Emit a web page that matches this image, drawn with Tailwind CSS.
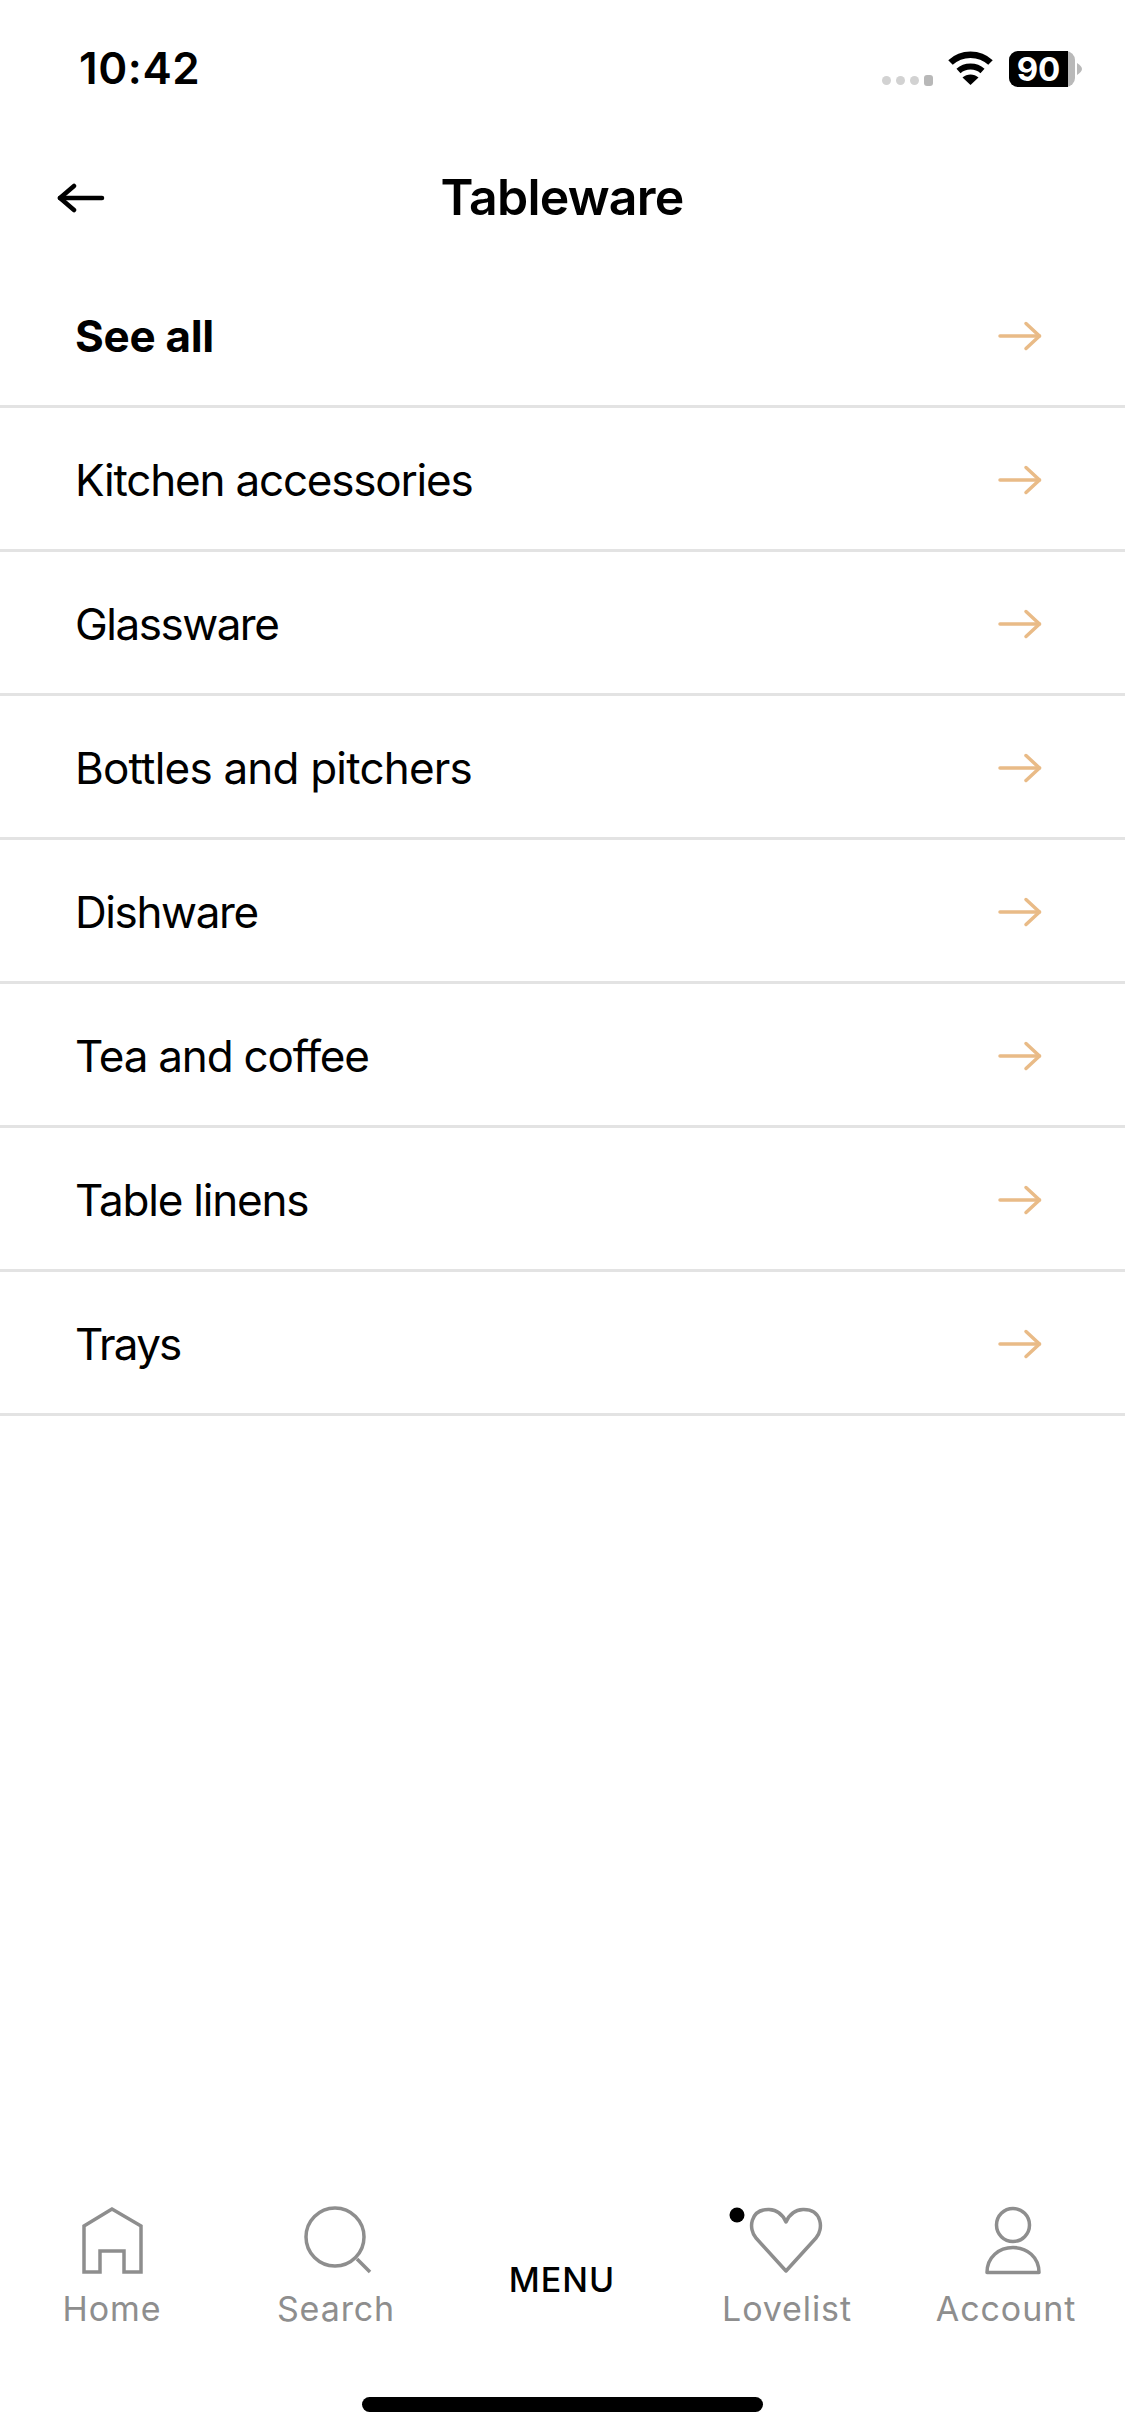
<!DOCTYPE html>
<html lang="en">
<head>
  <meta charset="UTF-8" />
  <meta name="viewport" content="width=device-width, initial-scale=1.0" />
  <title>Tableware</title>
  <script src="https://cdn.jsdelivr.net/npm/@tailwindcss/browser@4"></script>
</head>
<body class="bg-white font-['Inter',sans-serif] text-black">
  <div class="flex flex-col w-[1125px] h-[2436px] overflow-hidden">
    <!-- Status bar -->
    <div class="flex justify-between h-[138px] shrink-0 pl-[79px] pr-[43px]">
      <span class="mt-[42px] text-[44px] leading-[53px] font-semibold tracking-[0.6px]">10:42</span>
      <div class="flex items-start mt-[51px]">
        <div class="flex items-center gap-[5px] mt-[24px]">
          <span class="w-[9px] h-[9px] rounded-full bg-[#d2d2d2]"></span>
          <span class="w-[9px] h-[9px] rounded-full bg-[#d2d2d2]"></span>
          <span class="w-[9px] h-[9px] rounded-full bg-[#d2d2d2]"></span>
          <span class="w-[9px] h-[11px] rounded-[3px] bg-[#b8b8b8]"></span>
        </div>
        <svg class="ml-[15px]" width="45" height="34" viewBox="0 0 45 34" fill="none">
          <path d="M2.5 11.5C13.5 1 31.5 1 42.5 11.5" stroke="#000" stroke-width="6.5" />
          <path d="M10.5 20C17 14 28 14 34.5 20" stroke="#000" stroke-width="6" />
          <path d="M22.5 34L14.5 26.5C19 22.5 26 22.5 30.5 26.5Z" fill="#000" />
        </svg>
        <div class="flex ml-[16px] w-[66px] h-[36px] rounded-[9px] bg-[#b9b9b9]">
          <div class="w-[59px] h-full rounded-l-[9px] bg-black text-white text-center text-[33px] leading-[36px] font-bold">90</div>
        </div>
        <svg class="mt-[12px] ml-[2px]" width="5" height="12" viewBox="0 0 5 12"><path d="M0 0C3 2 5 4 5 6C5 8 3 10 0 12Z" fill="#b9b9b9" /></svg>
      </div>
    </div>

    <!-- Header -->
    <div class="flex items-center h-[118px] shrink-0 pl-[57px] pr-[106px]">
      <svg class="shrink-0 mt-[1px]" width="48" height="30" viewBox="0 0 48 30" fill="none" stroke="#000" stroke-width="4.5" stroke-linecap="round" stroke-linejoin="round">
        <path d="M45 15H3" />
        <path d="M17 3L3 15L17 27" />
      </svg>
      <h1 class="flex-1 text-center text-[50px] leading-[60px] font-semibold tracking-[-0.8px]">Tableware</h1>
    </div>

    <!-- Category list -->
    <main class="flex-1 mt-[8px]">
      <a class="flex items-center justify-between h-[144px] pt-[3px] pl-[75px] pr-[83px] border-b-[3px] border-[#e3e3e3]"><span class="text-[44px] font-bold tracking-[-0.3px]">See all</span><svg width="44" height="30" viewBox="0 0 44 30" fill="none" stroke="#e9bb87" stroke-width="3.5" stroke-linecap="round" stroke-linejoin="round"><path d="M2 15H41.5"/><path d="M28 2.5L41.5 15L28 27.5"/></svg></a>
      <a class="flex items-center justify-between h-[144px] pt-[3px] pl-[75px] pr-[83px] border-b-[3px] border-[#e3e3e3]"><span class="text-[44px] tracking-[-1.2px]">Kitchen accessories</span><svg width="44" height="30" viewBox="0 0 44 30" fill="none" stroke="#e9bb87" stroke-width="3.5" stroke-linecap="round" stroke-linejoin="round"><path d="M2 15H41.5"/><path d="M28 2.5L41.5 15L28 27.5"/></svg></a>
      <a class="flex items-center justify-between h-[144px] pt-[3px] pl-[75px] pr-[83px] border-b-[3px] border-[#e3e3e3]"><span class="text-[44px] tracking-[-1.5px]">Glassware</span><svg width="44" height="30" viewBox="0 0 44 30" fill="none" stroke="#e9bb87" stroke-width="3.5" stroke-linecap="round" stroke-linejoin="round"><path d="M2 15H41.5"/><path d="M28 2.5L41.5 15L28 27.5"/></svg></a>
      <a class="flex items-center justify-between h-[144px] pt-[3px] pl-[75px] pr-[83px] border-b-[3px] border-[#e3e3e3]"><span class="text-[44px] tracking-[-0.8px]">Bottles and pitchers</span><svg width="44" height="30" viewBox="0 0 44 30" fill="none" stroke="#e9bb87" stroke-width="3.5" stroke-linecap="round" stroke-linejoin="round"><path d="M2 15H41.5"/><path d="M28 2.5L41.5 15L28 27.5"/></svg></a>
      <a class="flex items-center justify-between h-[144px] pt-[3px] pl-[75px] pr-[83px] border-b-[3px] border-[#e3e3e3]"><span class="text-[44px] tracking-[-1.4px]">Dishware</span><svg width="44" height="30" viewBox="0 0 44 30" fill="none" stroke="#e9bb87" stroke-width="3.5" stroke-linecap="round" stroke-linejoin="round"><path d="M2 15H41.5"/><path d="M28 2.5L41.5 15L28 27.5"/></svg></a>
      <a class="flex items-center justify-between h-[144px] pt-[3px] pl-[75px] pr-[83px] border-b-[3px] border-[#e3e3e3]"><span class="text-[44px] tracking-[-1.2px]">Tea and coffee</span><svg width="44" height="30" viewBox="0 0 44 30" fill="none" stroke="#e9bb87" stroke-width="3.5" stroke-linecap="round" stroke-linejoin="round"><path d="M2 15H41.5"/><path d="M28 2.5L41.5 15L28 27.5"/></svg></a>
      <a class="flex items-center justify-between h-[144px] pt-[3px] pl-[75px] pr-[83px] border-b-[3px] border-[#e3e3e3]"><span class="text-[44px] tracking-[-1.2px]">Table linens</span><svg width="44" height="30" viewBox="0 0 44 30" fill="none" stroke="#e9bb87" stroke-width="3.5" stroke-linecap="round" stroke-linejoin="round"><path d="M2 15H41.5"/><path d="M28 2.5L41.5 15L28 27.5"/></svg></a>
      <a class="flex items-center justify-between h-[144px] pt-[3px] pl-[75px] pr-[83px] border-b-[3px] border-[#e3e3e3]"><span class="text-[44px] tracking-[-1.8px]">Trays</span><svg width="44" height="30" viewBox="0 0 44 30" fill="none" stroke="#e9bb87" stroke-width="3.5" stroke-linecap="round" stroke-linejoin="round"><path d="M2 15H41.5"/><path d="M28 2.5L41.5 15L28 27.5"/></svg></a>
    </main>

    <!-- Bottom nav -->
    <nav class="flex h-[192px] shrink-0 text-[34px] leading-[42px] tracking-[0.9px] text-[#8e8e8e]">
      <a class="flex flex-col items-center w-[224px]">
        <svg width="80" height="70" viewBox="0 0 80 70" fill="none" stroke="#8e8e8e" stroke-width="3.5"><path d="M40 4L12 21V67H28V46H52V67H69V21Z"/></svg>
        <span class="mt-[13px]">Home</span>
      </a>
      <a class="flex flex-col items-center w-[224px]">
        <svg width="80" height="70" viewBox="0 0 80 70" fill="none" stroke="#8e8e8e" stroke-width="3.5"><circle cx="39" cy="32" r="29"/><path d="M61 54L74 67"/></svg>
        <span class="mt-[13px]">Search</span>
      </a>
      <a class="flex flex-col items-center w-[228px]">
        <span class="mt-[54px] text-black font-[550] tracking-[1px]">MENU</span>
      </a>
      <a class="flex flex-col items-center w-[222px]">
        <svg class="overflow-visible" width="80" height="70" viewBox="0 0 80 70" fill="none" stroke="#8e8e8e" stroke-width="3.5"><path d="M39 66L9 33C1 24 3 4 22 4.5C31 5 36 10 39 17C42 10 47 5 56 4.5C75 4 77 24 69 33Z" stroke-linejoin="round"/><circle cx="-10" cy="10" r="7.5" fill="#000" stroke="none"/></svg>
        <span class="mt-[13px]">Lovelist</span>
      </a>
      <a class="flex flex-col items-center w-[216px]">
        <svg width="80" height="70" viewBox="0 0 80 70" fill="none" stroke="#8e8e8e" stroke-width="3.5" stroke-linejoin="round"><circle cx="47" cy="20" r="16.5"/><path d="M21 67.5C21 52 33 42.5 47 42.5C61 42.5 73 52 73 67.5Z"/></svg>
        <span class="mt-[13px]">Account</span>
      </a>
    </nav>
    <div class="shrink-0 h-[39px]">
      <div class="w-[401px] h-[15px] mx-auto rounded-full bg-black"></div>
    </div>
  </div>
</body>
</html>
